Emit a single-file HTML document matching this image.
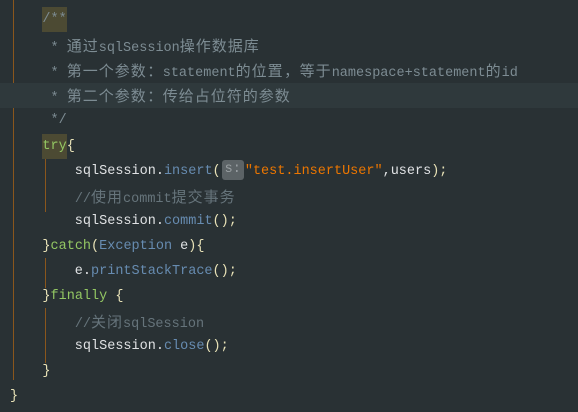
<!DOCTYPE html><html><head><meta charset="utf-8"><style>
body{margin:0;width:578px;height:412px;background:#293134;overflow:hidden;position:relative;font-family:"Liberation Mono","Noto Sans CJK SC",monospace;font-size:13.5px;color:#e0e2e4}
.l{position:absolute;left:10px;height:25px;line-height:25px;white-space:pre;width:568px}
.c{color:#7d8c93}.g{color:#66747b}.k{color:#93c763}.m{color:#678cb1}.s{color:#ec7600}.p{color:#e8e2b7}
.cj{font-family:"Noto Sans CJK SC",sans-serif;font-size:15px;line-height:25px;letter-spacing:1px}
.cl{display:inline-block;width:16px;text-align:center;font-family:"Noto Sans CJK SC",sans-serif;font-size:15px;line-height:25px}
.hl{background:#2f393c}
.vl{position:absolute;width:1px;background:#8a561c}
.hint{display:inline-block;background:#5c6366;color:#9aa0a3;border-radius:3px;height:20px;line-height:20px;padding:0 3px;vertical-align:middle;margin:0 1px}
.mk{background:#4c4a33;display:inline-block;height:25px}
</style></head><body>
<div class="vl" style="left:13px;top:0;height:380px"></div>
<div class="vl" style="left:45px;top:158px;height:54px"></div>
<div class="vl" style="left:45px;top:258px;height:30px"></div>
<div class="vl" style="left:45px;top:308px;height:55px"></div>
<div class="l" style="top:7px">    <span class="c mk">/**</span></div>
<div class="l" style="top:33px">     <span class="c">* <span class="cj">通过</span>sqlSession<span class="cj">操作数据库</span></span></div>
<div class="l" style="top:58px">     <span class="c">* <span class="cj">第一个参数</span><span class="cl">：</span>statement<span class="cj">的位置</span><span class="cl">，</span><span class="cj">等于</span>namespace+statement<span class="cj">的</span>id</span></div>
<div class="l hl" style="top:83px;left:0;padding-left:10px">     <span class="c">* <span class="cj">第二个参数</span><span class="cl">：</span><span class="cj">传给占位符的参数</span></span></div>
<div class="l" style="top:108px">     <span class="c">*/</span></div>
<div class="l" style="top:134px">    <span class="k mk">try</span><span class="p">{</span></div>
<div class="l" style="top:159px">        sqlSession.<span class="m">insert</span><span class="p">(</span><span class="hint">s:</span><span class="s">"test.insertUser"</span>,users<span class="p">);</span></div>
<div class="l" style="top:184px">        <span class="g">//<span class="cj">使用</span>commit<span class="cj">提交事务</span></span></div>
<div class="l" style="top:209px">        sqlSession.<span class="m">commit</span><span class="p">();</span></div>
<div class="l" style="top:234px">    <span class="p">}</span><span class="k">catch</span><span class="p">(</span><span class="m">Exception</span> e<span class="p">){</span></div>
<div class="l" style="top:259px">        e.<span class="m">printStackTrace</span><span class="p">();</span></div>
<div class="l" style="top:284px">    <span class="p">}</span><span class="k">finally</span> <span class="p">{</span></div>
<div class="l" style="top:309px">        <span class="g">//<span class="cj">关闭</span>sqlSession</span></div>
<div class="l" style="top:334px">        sqlSession.<span class="m">close</span><span class="p">();</span></div>
<div class="l" style="top:359px">    <span class="p">}</span></div>
<div class="l" style="top:384px"><span class="p">}</span></div>
</body></html>
